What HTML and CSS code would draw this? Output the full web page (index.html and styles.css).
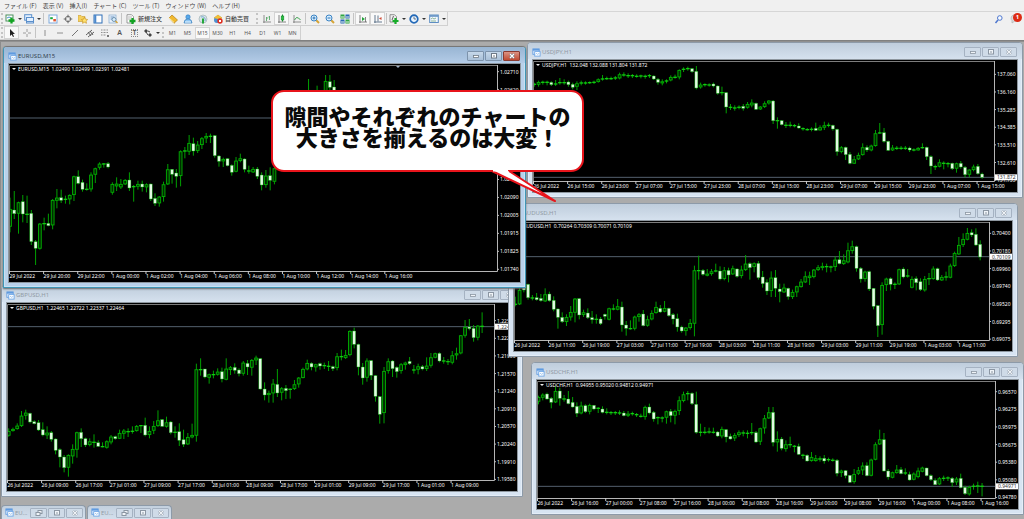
FILE: index.html
```
<!DOCTYPE html>
<html lang="ja">
<head>
<meta charset="utf-8">
<title>EURUSD,M15</title>
<link rel="stylesheet" href="styles.css">
</head>
<body>
<svg class="defs" aria-hidden="true">
  <symbol id="win" viewBox="0 0 10 10"><rect x="1" y="1" width="7" height="6" fill="#eef6ff" stroke="#5f9be0"/><path d="M1 2h7" stroke="#5f9be0" stroke-width="2"/><rect x="3" y="4" width="6" height="5" fill="#fff" stroke="#6ea6e6"/><path d="M4 7l1-1 1 1 2-1" fill="none" stroke="#6ea6e6" stroke-width=".7"/></symbol>
  <symbol id="min" viewBox="0 0 10 8"><rect x="2.5" y="3.5" width="5" height="2" fill="#fff" stroke="#6f7a86" stroke-width=".8"/></symbol>
  <symbol id="max" viewBox="0 0 10 8"><rect x="2.5" y="1.5" width="5" height="4.5" fill="#fff" stroke="#6f7a86"/><path d="M4 4h2" stroke="#6f7a86"/></symbol>
  <symbol id="restore" viewBox="0 0 10 8"><rect x="4" y="1.5" width="4" height="3" fill="#fff" stroke="#6f7a86"/><rect x="2" y="3.5" width="4" height="3" fill="#fff" stroke="#6f7a86"/></symbol>
  <symbol id="close" viewBox="0 0 10 8"><path d="M3 2l4 4M7 2L3 6" stroke="#6f7a86" stroke-width="2.4"/><path d="M3 2l4 4M7 2L3 6" stroke="#fff" stroke-width="1.1"/></symbol>
</svg>

<header>
  <nav class="menu">
    <button>ファイル (F)</button><button>表示 (V)</button><button>挿入(I)</button><button>チャート (C)</button><button>ツール (T)</button><button>ウィンドウ (W)</button><button>ヘルプ (H)</button>
  </nav>
  <div class="row">
    <div class="bar">
      <i class="grip"></i>
      <button class="tool drop" aria-label="新規チャート"><svg viewBox="0 0 10 10"><rect x="1" y="1" width="7" height="6" fill="#fff" stroke="#4b8f5c"/><path d="M2 4l2-1 2 1" fill="none" stroke="#4a90d0"/><path d="M6.5 3.5v6M3.5 6.5h6" stroke="#12a322" stroke-width="2.3"/></svg></button>
      <button class="tool drop" aria-label="組表示"><svg viewBox="0 0 10 10"><rect x=".7" y=".7" width="7" height="5.5" fill="#e3f0ff" stroke="#5b8fca"/><rect x="2.5" y="3.5" width="7" height="5.5" fill="#e3f0ff" stroke="#5b8fca"/><path d="M2.5 7.5h7" stroke="#5b8fca"/></svg></button>
      <i class="sep"></i>
      <button class="tool" aria-label="気配値表示"><svg viewBox="0 0 10 10"><rect x="1" y="1" width="8" height="8" fill="#fff" stroke="#7ea9dc"/><path d="M2.2 3.2h2.6v2H2.2z" fill="#18a83a"/><path d="M5.3 5h2.6v2.4H5.3z" fill="#e0532b"/></svg></button>
      <button class="tool" aria-label="データウィンドウ"><svg viewBox="0 0 10 10"><circle cx="5" cy="5" r="2.7" fill="none" stroke="#777"/><path d="M5 .7v3M5 6.3v3M.7 5h3M6.3 5h3" stroke="#666"/></svg></button>
      <button class="tool" aria-label="ナビゲーター"><svg viewBox="0 0 10 10"><path d="M0 1.5h3l1 1h3v5H0z" fill="#f5d05d" stroke="#c79a2f" stroke-width=".6"/><path d="M6.5 3.2l1 2 2.2.3-1.6 1.6.4 2.2-2-1-2 1 .4-2.2L3.3 5.500l2.200-.3z" fill="#ffe36e" stroke="#c28a1d" stroke-width=".6"/></svg></button>
      <button class="tool" aria-label="ターミナル"><svg viewBox="0 0 10 10"><rect x="1" y="1" width="8" height="8" fill="#fff" stroke="#2e6fb7"/><path d="M2.300 1v8" stroke="#4b88cc" stroke-width="2"/></svg></button>
      <button class="tool" aria-label="ストラテジーテスター"><svg viewBox="0 0 10 10"><rect x="1" y="1" width="7" height="8" fill="#e8f1fb" stroke="#85a9cf" stroke-width=".7"/><path d="M2.500 3h4M2.500 5h2" stroke="#6c96c4"/><circle cx="6" cy="5.500" r="2" fill="#d7ecfb" stroke="#59819f" stroke-width=".8"/><path d="M7.500 7l2 2" stroke="#d2a235" stroke-width="1.500"/></svg></button>
      <i class="sep"></i>
      <button class="tool text"><svg viewBox="0 0 10 10"><path d="M1 .7h4.500l2 2V9H1z" fill="#fff" stroke="#777" stroke-width=".7"/><path d="M2 3h4M2 5h3" stroke="#888" stroke-width=".6"/><path d="M6.500 4v6M3.500 7h6" stroke="#12a322" stroke-width="2.300"/></svg>新規注文</button>
      <button class="tool" aria-label="MetaEditor"><svg viewBox="0 0 10 10"><path d="M1 4l3-3 5.500 5-3.500 3.300z" fill="#f0b92f" stroke="#b67e13" stroke-width=".7"/><path d="M1 4l5 4.500" stroke="#fff1b0"/></svg></button>
      <button class="tool" aria-label="アカウント"><svg viewBox="0 0 10 10"><circle cx="5" cy="3" r="2.200" fill="#5aa9ea" stroke="#2e79be" stroke-width=".6"/><path d="M1 9q0-4 4-4t4 4z" fill="#8cc6f5" stroke="#397fbc" stroke-width=".7"/><path d="M2 8h6" stroke="#eaf6ff"/></svg></button>
      <button class="tool" aria-label="シグナル"><svg viewBox="0 0 10 10"><circle cx="5" cy="5" r="4" fill="#d9e6e8" stroke="#a7b7bd" stroke-width=".8"/><path d="M3 3a3 3 0 0 1 4 4" fill="none" stroke="#78a8d0"/><path d="M5 4.500v5" stroke="#25a73a" stroke-width="2"/></svg></button>
      <button class="tool text"><svg viewBox="0 0 10 10"><path d="M1 4l4-3 4 3-4 2z" fill="#f3c037" stroke="#b7851e" stroke-width=".5"/><circle cx="4" cy="6" r="3" fill="#4d8fd0"/><path d="M1 4l4-3 4 3-4 1z" fill="#f3c037"/><circle cx="7" cy="7" r="2.700" fill="#df2f22"/><rect x="6" y="6" width="2" height="2" fill="#fff"/></svg>自動売買</button>
      <i class="grip"></i>
      <button class="tool" aria-label="バーチャート"><svg viewBox="0 0 10 10"><path d="M2 1v8M1 8h8" stroke="#777" stroke-width=".8"/><path d="M4.500 3v4M4.500 4H6M7.500 2v4M6.500 3h1" stroke="#48a05a" stroke-width=".8"/></svg></button>
      <button class="tool on" aria-label="ローソク足"><svg viewBox="0 0 10 10"><path d="M2 1v8M1 8h8" stroke="#666" stroke-width=".8"/><path d="M5.500.5v7" stroke="#138b28"/><rect x="4.200" y="2" width="2.600" height="4" fill="#29c043" stroke="#138b28" stroke-width=".6"/></svg></button>
      <button class="tool" aria-label="ラインチャート"><svg viewBox="0 0 10 10"><path d="M2 1v8M1 8h8" stroke="#777" stroke-width=".8"/><path d="M2.500 6q2-4 4-2l2 2" fill="none" stroke="#3aa24d"/></svg></button>
      <i class="sep"></i>
      <button class="tool" aria-label="拡大"><svg viewBox="0 0 10 10"><path d="M6 6l3 3" stroke="#d6a536" stroke-width="2"/><circle cx="4" cy="4" r="3" fill="#d8eeff" stroke="#3b83c3"/><path d="M2.500 4h3M4 2.500v3" stroke="#2c75b5"/></svg></button>
      <button class="tool" aria-label="縮小"><svg viewBox="0 0 10 10"><path d="M6 6l3 3" stroke="#d6a536" stroke-width="2"/><circle cx="4" cy="4" r="3" fill="#d8eeff" stroke="#3b83c3"/><path d="M2.500 4h3" stroke="#2c75b5"/></svg></button>
      <button class="tool" aria-label="整列"><svg viewBox="0 0 10 10"><path d="M.5.500h4v4h-4zM5.500 5.500h4v4h-4z" fill="#2fa544"/><path d="M5.500.500h4v4h-4zM.5 5.500h4v4h-4z" fill="#2868b5"/><path d="M1 3h3M6 3h3M1 8h3M6 8h3" stroke="#eaf6ea"/></svg></button>
      <i class="sep"></i>
      <button class="tool on" aria-label="自動スクロール"><svg viewBox="0 0 10 10"><path d="M2 1v8M1 8h8M7.500 3v5" stroke="#666" stroke-width=".8"/><path d="M4 3l3 2-3 2z" fill="#24a53b"/></svg></button>
      <button class="tool on" aria-label="チャートシフト"><svg viewBox="0 0 10 10"><path d="M2 1v8M1 8h8M5 1.500v6" stroke="#556c84" stroke-width=".9"/><path d="M8.500 3L6 4.500 8.500 6z" fill="#cf4935"/></svg></button>
      <i class="sep"></i>
      <button class="tool drop" aria-label="インディケータ"><svg viewBox="0 0 10 10"><path d="M1 .7h4.500l2 2V8H1z" fill="#eee" stroke="#777" stroke-width=".8"/><path d="M3 6l1.500-4" stroke="#666"/><path d="M6.500 4v6M3.500 7h6" stroke="#16ac28" stroke-width="2.200"/></svg></button>
      <button class="tool drop wide" aria-label="時間足"><svg viewBox="0 0 10 10"><circle cx="5" cy="5" r="3.800" fill="#e8f4ff" stroke="#2369b7" stroke-width="1.700"/><path d="M5 2.500V5h2" fill="none" stroke="#345" stroke-width=".7"/></svg></button>
      <button class="tool drop wide" aria-label="定型チャート"><svg viewBox="0 0 10 10"><rect x=".7" y="1" width="8.600" height="7.500" fill="#f2f8ff" stroke="#5d8dc2"/><path d="M1 2h8" stroke="#5d8dc2" stroke-width="1.500"/><path d="M2 5l1.500-1L5 5l2-1M2 7h5" fill="none" stroke="#72a27c" stroke-width=".8"/></svg></button>
    </div>
    <div class="status">
      <button class="tool" aria-label="検索"><svg viewBox="0 0 10 10"><path d="M4 6L1.500 9" stroke="#4f78cf" stroke-width="1.500"/><circle cx="5.800" cy="4" r="2.300" fill="#f7fbff" stroke="#4f78cf"/></svg></button>
      <button class="tool notice" aria-label="通知"><svg viewBox="0 0 10 10"><path d="M1 4q0-3 4-3t4 3-4 3L2 9V6.500Q1 6 1 4z" fill="#ddd" stroke="#aaa" stroke-width=".6"/></svg><span>1</span></button>
    </div>
  </div>
  <div class="row">
    <div class="bar">
      <i class="grip"></i>
      <button class="tool on" aria-label="カーソル"><svg viewBox="0 0 10 10"><path d="M3 1v7l1.700-1.500L6 9l1-.5-1.200-2.400H8z" fill="#222"/></svg></button>
      <button class="tool" aria-label="十字カーソル"><svg viewBox="0 0 10 10"><path d="M5 1v3M5 6v3M1 5h3M6 5h3" stroke="#888" stroke-width=".8"/></svg></button>
      <i class="sep"></i>
      <button class="tool" aria-label="垂直線"><svg viewBox="0 0 10 10"><path d="M5 2v6" stroke="#777" stroke-width=".8"/></svg></button>
      <button class="tool" aria-label="水平線"><svg viewBox="0 0 10 10"><path d="M2 5h6" stroke="#777" stroke-width=".8"/></svg></button>
      <button class="tool" aria-label="トレンドライン"><svg viewBox="0 0 10 10"><path d="M2 8l6-6" stroke="#666" stroke-width=".9"/></svg></button>
      <button class="tool" aria-label="チャネル"><svg viewBox="0 0 10 10"><path d="M1 7l6-5M3 9l6-5M3 4l3 4M5 3l3 4" stroke="#555" stroke-width=".9"/></svg></button>
      <button class="tool" aria-label="フィボナッチ"><svg viewBox="0 0 10 10"><path d="M1 2h7M1 4.500h7M1 7h5" stroke="#777" stroke-width=".8" stroke-dasharray="1 .5"/><path d="M7 7h2v2H7z" fill="#777"/></svg></button>
      <button class="tool letter">A</button>
      <button class="tool letter" aria-label="ラベル"><span>T</span></button>
      <button class="tool drop" aria-label="矢印"><svg viewBox="0 0 10 10"><path d="M1 3l2-2 2 2-2 2zM5 7l2-2 2 2-2 2z" fill="#444"/><path d="M3 4l2 3M5 3l2 1" stroke="#444"/></svg></button>
      <i class="grip"></i>
      <button class="tf">M1</button><button class="tf">M5</button><button class="tf on">M15</button><button class="tf">M30</button><button class="tf">H1</button><button class="tf">H4</button><button class="tf">D1</button><button class="tf">W1</button><button class="tf">MN</button>
    </div>
  </div>
</header>

<main class="desk">
  <section class="window jpy" data-chart="jpy"></section>
  <section class="window gbp" data-chart="gbp"></section>
  <section class="window aud" data-chart="aud"></section>
  <section class="window chf" data-chart="chf"></section>
  <section class="window eur active" data-chart="eur"></section>
  <div class="tray">
    <div class="mini"><svg class="wicon"><use href="#win"/></svg><h2>EU...</h2><button aria-label="元に戻す"><svg><use href="#restore"/></svg></button><button aria-label="最大化"><svg><use href="#max"/></svg></button><button aria-label="閉じる"><svg><use href="#close"/></svg></button></div>
    <div class="mini"><svg class="wicon"><use href="#win"/></svg><h2>EU...</h2><button aria-label="元に戻す"><svg><use href="#restore"/></svg></button><button aria-label="最大化"><svg><use href="#max"/></svg></button><button aria-label="閉じる"><svg><use href="#close"/></svg></button></div>
  </div>
  <aside class="callout">
    <p>隙間やそれぞれのチャートの<br>大きさを揃えるのは大変！</p>
    <svg class="tail" viewBox="0 0 68 34"><path d="M2 1L65 31 19 1" fill="#fff" stroke="#e8141b" stroke-width="2" stroke-linejoin="round"/><path d="M3 0h15" stroke="#fff" stroke-width="3"/></svg>
  </aside>
</main>
<script src="charts.js"></script>
</body>
</html>
```
FILE: styles.css
```
* { box-sizing: border-box; }
body {
  margin: 0;
  height: 100vh;
  display: flex;
  flex-direction: column;
  overflow: hidden;
  background: #ababab;
  font-family: "Noto Sans", "Noto Sans CJK JP", sans-serif;
  font-size: 6px;
  color: #444;
}
button {
  font: inherit;
  color: inherit;
  margin: 0;
  padding: 0;
  border: 0;
  background: none;
}
.defs { position: absolute; width: 0; height: 0; }

header { background: #f0f0f0; border-bottom: 1px solid #808080; }
.menu {
  display: flex;
  gap: 6px;
  height: 12px;
  padding-left: 4px;
  border-bottom: 1px solid #d6d6d6;
  font-family: "Noto Sans CJK JP", sans-serif;
}
.row { display: flex; justify-content: space-between; height: 14px; }
.bar {
  display: flex;
  align-items: center;
  border: 1px solid #d0d0d0;
  border-width: 0 1px 1px 0;
}
.tool {
  display: flex;
  align-items: center;
  justify-content: center;
  width: 15px;
  height: 13px;
}
.tool svg { width: 10px; height: 10px; flex: none; }
.on { background: #f9f9f9; box-shadow: inset 0 0 0 1px #d4d4d4; }
.drop { width: 19px; gap: 3px; }
.drop::after { content: ""; border: 2px solid transparent; border-top-color: #333; border-bottom: 0; width: 0; }
.wide { width: 20px; }
.text { width: auto; gap: 2px; padding: 0 3px; font-family: "Noto Sans CJK JP", sans-serif; font-weight: 500; }
.sep { width: 1px; height: 11px; background: #c4c4c4; margin: 0 1px; }
.grip { width: 0; height: 11px; border-left: 2px dotted #c4c4c4; margin: 0 1px; }
.text + .grip { margin-left: 4px; }
.letter { font-size: 7px; font-weight: 600; color: #555; }
.letter span { border: 1px dotted #888; line-height: 6px; padding: 0 1px; }
.tf { width: 15px; height: 12px; font-size: 5px; color: #555; }
.status { display: flex; align-items: center; gap: 1px; padding-right: 2px; }
.notice { position: relative; }
.notice span {
  position: absolute;
  top: 0;
  right: 0;
  width: 9px;
  border-radius: 5px;
  background: #dd2a14;
  color: #fff;
  font-weight: 700;
  line-height: 9px;
}

.desk { position: relative; flex: 1; overflow: hidden; border-left: 1px solid #8c8c8c; border-top: 1px solid #909090; }
.window {
  position: absolute;
  padding: 0 4px 4px;
  border: 1px solid #8d9aa8;
  border-radius: 4px 4px 0 0;
  background: #d7e4f2;
  box-shadow: inset 0 0 0 1px #e4edf7;
  display: flex;
  flex-direction: column;
}
.active { background: #b9d1ea; border-color: #3f95b5; border-top-color: #777; box-shadow: inset 0 0 0 1px #c6e2f4, 0 1px 2px #666; }
.jpy { left: 526px; top: 0; width: 496px; height: 156px; }
.aud { left: 507px; top: 161px; width: 510px; height: 154px; }
.gbp { left: 0; top: 243px; width: 522px; height: 212px; }
.chf { left: 530px; top: 320px; width: 493px; height: 153px; }
.eur { left: 2px; top: 4px; width: 523px; height: 242px; }
.titlebar {
  display: flex;
  align-items: center;
  gap: 1px;
  height: 16px;
  flex: none;
  margin: 0 -4px;
  padding: 2px 5px 0 4px;
  border-radius: 3px 3px 0 0;
  background: linear-gradient(#bfcddc, #d5e1ee);
}
.active .titlebar { background: linear-gradient(#98b5d3, #b4cce7); }
h2 { flex: 1; margin: 0; font-size: 6px; font-weight: 400; color: #929ba5; }
.active h2 { color: #33434f; }
.wicon { width: 9px; height: 9px; flex: none; }
.titlebar button, .mini button {
  display: flex;
  align-items: center;
  justify-content: center;
  width: 17px;
  height: 10px;
  flex: none;
  border: 1px solid #a5b2c2;
  border-radius: 1px;
  background: #cfdbe8;
}
.titlebar button svg, .mini button svg { width: 10px; height: 8px; opacity: .7; }
.active .titlebar button { border-color: #7d93ab; background: linear-gradient(#c6d8ea, #a9c0d8); }
.active .titlebar button:last-child { border-color: #8a3a31; background: linear-gradient(#dc9384, #c04a32); }
.active .titlebar button svg { opacity: 1; }
.chart { display: block; flex: 1; min-height: 0; width: 100%; background: #000; outline: 1px solid #8e979f; outline-offset: -1px; }
.chart text { font: 5px "Noto Sans", sans-serif; fill: #fff; }
.chart .tag { fill: #333; }

.tray { position: absolute; left: 0; bottom: 0; display: flex; gap: 1px; }
.mini {
  display: flex;
  align-items: center;
  gap: 1px;
  width: 85px;
  height: 14px;
  padding: 0 2px 0 3px;
  border: 1px solid #8d9aa8;
  border-bottom: 0;
  border-radius: 4px 4px 0 0;
  background: linear-gradient(#c3d0de, #d3dfec);
}

.callout {
  position: absolute;
  left: 270px;
  top: 48px;
  width: 313px;
  height: 82px;
  padding-top: 13px;
  border: 2px solid #e8141b;
  border-radius: 13px;
  background: #fff;
  color: #0a0a0a;
  text-align: center;
}
.callout p { margin: 0; font: 900 22px/21px "Noto Sans CJK JP", sans-serif; white-space: nowrap; }
.tail { position: absolute; left: 217px; top: 78px; width: 68px; height: 34px; }
```
FILE: charts.js
```
// Candles: high, body top, body bottom, low in thirds of a pixel; u = rising, d = falling, none = flat.
const charts = {
  eur: {
    title: "EURUSD,M15", prices: "1.02490 1.02499 1.02391 1.02481", w: 513, h: 220, right: 489, bottom: 208, dy: 18, x0: 2,
    line: 219, tag: "", shift: 390,
    axis: "1.02710,1.02620,,,,,1.02180,1.02090,1.02005,1.01915,1.01825,1.01740", a0: 80, step: 53.9,
    times: "29 Jul 2022|29 Jul 20:00|29 Jul 22:00|1 Aug 00:00|1 Aug 02:00|1 Aug 04:00|1 Aug 06:00|1 Aug 08:00|1 Aug 10:00|1 Aug 12:00|1 Aug 14:00|1 Aug 16:00",
    data: "458 492 545 562 u/438 495 506 522 d/470 472 506 566 u/450 470 507 532 d/452 506 509 534/495 505 590 600 d/585 590 610 660 d/534 536 611 614 u/518 534 537 556/506 535 542 544 d/462 465 541 553 u/432 458 467 490 u/434 458 466 474 d/452 461 465 476/448 450 463 478 u/392 394 450 468 u/376 395 415 418 d/404 412 433 440 d/415 431 435 437/382 389 433 440 u/368 370 389 414 u/352 356 368 374 u/354 355 359 368/351 356 366 370 d/412 417 443 449 u/397 416 424 438 u/402 417 427 432 u/402 405 418 420 u/382 405 429 438 d/420 423 427 470/407 417 425 434 u/407 417 426 440 d/415 418 427 442 u/416 417 462 468 d/445 460 475 483 d/453 455 475 485 u/410 418 456 470 u/357 373 418 420 u/372 373 388 416 d/372 384 394 428 d/316 319 393 424 u/306 316 320 340/270 294 320 330 u/278 296 318 332 d/288 299 318 324 u/276 280 300 312 u/264 273 280 294 u/266 272 276 294/270 272 332 338 d/330 333 349 365 d/338 342 349 366 u/340 341 362 364 d/358 361 382 392 d/336 347 380 382 u/326 340 348 352 u/340 342 373 382 d/362 376 380 386/366 372 382 384 u/366 372 394 402 d/382 390 420 436 d/375 392 420 428 u/367 392 406 436 d/350 370 410 418 u////////102 140 160 170 u//122 140 160 170 d//90 108 150 160 u/90 110 127 150 d/105 126 140 150 d"
  },
  gbp: {
    title: "GBPUSD,H1", prices: "1.22465 1.22722 1.22337 1.22464", w: 512, h: 190, right: 488, bottom: 178, dy: 17, x0: 2.7,
    line: 125, tag: "1.22464",
    axis: "1.22560,1.22230,1.21900,1.21570,1.21240,1.20910,1.20570,1.20240,1.19910,1.19580", a0: 107, step: 52.9,
    times: "26 Jul 2022|26 Jul 09:00|26 Jul 17:00|27 Jul 01:00|27 Jul 09:00|27 Jul 17:00|28 Jul 01:00|28 Jul 09:00|28 Jul 17:00|29 Jul 01:00|29 Jul 09:00|29 Jul 17:00|1 Aug 01:00|1 Aug 09:00",
    data: "430 438 452 455 u/428 432 438 440 u/415 422 432 434 u/378 392 423 426 u/374 383 392 404 u/383 385 411 415 d/406 410 416 418 d/405 413 435 438 d/412 434 450 454 d/424 443 451 462 u/438 443 463 470 d/460 462 496 508 d/490 494 516 547 d/510 516 548 562 d/508 510 548 575 u/478 492 514 536 u/440 442 494 518 u/430 442 461 486 d/458 461 480 486 d/460 469 480 484 u/448 470 475 488/466 473 484 486 d/472 483 487 487/466 469 488 491 u/450 455 472 478 u/452 455 461 464 d/434 444 461 462 u/432 437 446 462 u/430 438 443 456/424 437 442 446/420 423 438 440 u/420 420 423 444/398 421 450 454 d/424 438 450 460 u/408 423 437 447 u/376 406 423 426 u/402 404 424 426 d/395 412 425 428 u/408 411 443 448 d/424 440 444 458/415 440 466 483 d/434 464 478 486 d/444 456 478 480 u/416 450 457 460 u/236 253 452 470 u/220 252 257 272/252 252 276 280 d/266 268 278 296 u/257 267 271 280/250 260 269 272 u/248 260 282 292 d/220 251 284 286 u/243 247 255 270 u/235 247 256 266 d/250 255 266 274 d/228 233 266 272 u/225 235 246 270 d/222 225 248 272 u/212 218 226 240 u/220 221 312 314 d/292 312 330 346 d/317 324 330 353 u/282 296 325 353 u/252 298 324 336 d/306 310 323 346 u/300 310 317 342 d/310 311 316 341/285 298 312 315 u/276 278 298 308 u/248 252 279 280 u/224 234 253 256 u/232 235 246 256 d/236 238 247 260 u/233 236 243 254 d/233 240 243 252/228 242 246 258/242 245 251 258 d/204 214 249 256 u/194 213 217 226/195 210 219 222 u/136 138 210 214 u/128 138 178 190 d/176 178 246 271 d/234 246 279 299 d/220 227 278 290 u/225 227 271 285 d/270 272 334 350 d/333 335 388 416 d/246 258 384 415 u/220 229 258 266 u/225 228 251 276 d/244 247 260 278 d/234 238 258 266 u/230 233 240 254 u/216 229 236 240 d/240 253 257 266/236 244 254 268 u/240 245 252 256 d/217 242 252 258 u/204 217 242 248 u/203 205 218 220 u/202 205 228 232 d/216 226 230 236/222 228 232 240/198 211 233 238 u/188 205 211 224 u/150 151 205 208 u/105 126 152 158 u/102 126 131 136 d/120 130 158 170 d/120 122 158 166 u/82 122 125 144"
  },
  jpy: {
    title: "USDJPY,H1", prices: "132.048 132.088 131.804 131.872", w: 486, h: 134, right: 462, bottom: 122, dy: 19, x0: 2.3,
    line: 412, tag: "131.872",
    axis: "137.060,136.160,135.285,134.385,133.510,132.610,131.735", a0: 103, step: 52.9,
    times: "26 Jul 2022|26 Jul 15:00|26 Jul 23:00|27 Jul 07:00|27 Jul 15:00|27 Jul 23:00|28 Jul 07:00|28 Jul 15:00|28 Jul 23:00|29 Jul 07:00|29 Jul 15:00|29 Jul 23:00|1 Aug 07:00|1 Aug 15:00",
    data: "128 131 136 140/122 126 134 140 u/122 125 128 134/122 125 129 136/124 127 134 138 d/120 130 134 138/114 126 131 134/118 126 129 134/122 126 134 140 d/128 133 142 148 d/124 130 140 150 u/122 127 131 136/124 127 130 134/124 126 129 132/122 125 129 132/115 118 126 128 u/105 115 118 122/110 114 118 120/110 114 117 120/108 112 116 120/98 103 115 118 u/97 103 106 110/100 105 108 114/102 105 110 114/103 107 110 113/104 106 111 115/104 107 111 116/102 105 109 114/106 108 117 120 d/114 118 127 134 d/118 124 130 136 u/118 121 126 130/106 111 121 124 u/104 110 113 116/88 90 112 118 u/82 86 91 96/80 84 88 92/84 86 95 98 d/78 94 144 148 d/128 134 142 146 u/130 132 136 140/130 133 137 140/128 132 138 142 d/136 138 160 164 d/140 156 160 166/156 158 201 220 d/192 200 204 210/196 202 206 212/196 200 205 208/192 199 205 212 d/186 192 203 206 u/178 188 196 202 u/188 190 208 210 d/198 200 208 210 u/184 190 201 204 u/180 182 190 194 u/180 183 242 252 d/232 240 244 266/240 242 254 256 d/246 254 258 264/245 254 258 262/252 255 259 262/250 258 264 266 d/262 264 269 272/264 267 271 272/262 266 271 274/248 265 271 272 d/256 262 271 272 u/245 256 263 270 u/248 254 258 262/254 256 267 272 d/266 268 335 347 d/318 322 336 340 u/320 322 344 360 d/336 343 370 373 d/348 358 371 372 u/338 345 358 360 u/310 322 345 347 u/316 322 330 336 d/314 317 331 334 u/270 280 318 320 u/249 277 281 281/264 278 304 308 d/302 304 331 333 d/315 323 331 333 u/318 323 326 330/318 323 326 330/318 323 326 330/320 324 330 336 d/325 328 331 334/321 324 331 332 u/310 321 325 326/320 322 350 360 d/346 350 378 402 d/374 378 382 390/358 367 380 382 u/364 368 372 388/366 369 372 382/368 370 386 390 d/368 370 386 398 u/363 370 381 386 d/378 382 404 412 d/388 389 404 412 u/374 380 390 394 u/372 379 401 404 d/398 402 412 416 d"
  },
  aud: {
    title: "AUDUSD,H1", prices: "0.70264 0.70309 0.70071 0.70109", w: 500, h: 132, right: 476, bottom: 120, dy: 25, x0: 2.3,
    line: 185, tag: "0.70109",
    axis: "0.70400,0.70180,0.69960,0.69740,0.69520,0.69295,0.69075", a0: 115, step: 52.9,
    times: "26 Jul 2022|26 Jul 11:00|26 Jul 19:00|27 Jul 03:00|27 Jul 11:00|27 Jul 19:00|28 Jul 03:00|28 Jul 11:00|28 Jul 19:00|29 Jul 03:00|29 Jul 11:00|29 Jul 19:00|1 Aug 03:00|1 Aug 11:00",
    data: "305 326 330 334/274 285 328 330 u/270 275 285 292 d/266 268 308 314 d/300 307 312 316/294 308 314 317 d/297 310 317 320 d/280 298 319 321 u/290 297 317 320 d/304 316 343 349 d/340 342 367 401 d/352 367 380 384 d/358 366 381 393 u/333 351 367 377 u/309 311 353 382 u/309 311 360 373 d/344 352 360 366 u/340 354 368 372 d/348 368 374 386 d/358 371 375 386/366 372 386 390 d/356 358 364 374 d/338 340 374 376 u/328 340 344 346/312 334 344 346 u/320 336 390 410 d/378 390 400 422 d/376 399 402 404/362 365 401 406 u/354 358 366 380 u/345 357 392 394 d/362 373 392 395 u/346 354 373 376 u/320 336 354 356 u/330 340 351 354 d/318 339 350 352 u/338 340 362 365 d/354 359 372 388 d/356 371 396 410 d/392 396 408 413 d/396 398 408 422 u/372 384 399 404 u/212 226 386 424 u/182 225 228 254/222 226 238 242 d/222 236 242 244 u/222 229 237 242 u/206 226 230 232/214 228 252 256 d/216 226 252 256 u/218 226 240 262 d/212 220 238 240 u/220 222 244 248 d/212 224 243 250 u/180 206 225 228 u/202 206 218 254 d/202 205 216 232 u/198 205 248 254 d/228 246 266 278 d/253 262 288 300 d/229 248 288 306 u/225 248 280 306 d/266 282 290 322 d/266 278 292 294 u/278 280 305 314 d/284 291 306 312 u/272 274 292 306 u/252 260 276 278 u/229 244 262 264 u/230 242 249 270 u/222 224 246 250 u/210 217 225 228 u/203 213 219 226 u/206 213 217 232/212 214 217 232/184 194 216 228 u/168 194 206 208 d/178 196 207 210 u/143 166 202 205 u/137 154 168 176 u/152 155 220 230 d/216 220 252 263 d/227 230 252 260 u/227 230 282 288 d/279 280 334 343 d/330 332 392 426 d/262 270 390 419 u/248 251 270 288 u/247 251 268 286 d/262 266 269 282/221 223 268 270 u/217 222 246 250 d/222 241 244 248/244 252 278 280 u/244 251 263 286 d/250 260 284 288 d/243 252 286 290 u/234 249 253 270/214 221 252 254 u/218 221 255 258 d/240 246 256 258 u/230 244 248 257/206 212 248 250 u/170 174 213 216 u/126 150 178 180 u/115 132 150 156 u/99 114 134 136 u/103 113 120 126 d/100 118 150 153 d/136 148 186 196 d"
  },
  chf: {
    title: "USDCHF,H1", prices: "0.94955 0.95020 0.94812 0.94971", w: 483, h: 131, right: 459, bottom: 119, dy: 24, x0: 2.5,
    line: 394, tag: "0.94971",
    axis: "0.96570,0.96275,0.95975,0.95675,0.95380,0.95080,0.94780", a0: 110, step: 52.9,
    times: "26 Jul 2022|26 Jul 16:00|27 Jul 00:00|27 Jul 08:00|27 Jul 16:00|28 Jul 00:00|28 Jul 08:00|28 Jul 16:00|29 Jul 00:00|29 Jul 08:00|29 Jul 16:00|1 Aug 00:00|1 Aug 08:00|1 Aug 16:00",
    data: "122 126 140 148 u/115 119 128 136 u/113 117 132 134 d/126 130 142 160 d/94 108 142 144 u/98 108 130 152 d/120 130 134 140/108 132 146 148 d/126 142 156 158 d/142 154 175 186 d/140 152 175 178 u/148 152 170 174 d/146 150 170 178 u/150 151 162 166 d/156 158 162 174/154 162 172 175 d/160 170 174 178/168 171 174 180/168 171 175 180/166 172 176 180/168 174 182 184 d/168 176 182 186 u/170 174 179 182/174 177 182 186/176 182 186 188/152 156 186 194 u/146 156 174 178 d/168 172 192 200 d/184 186 191 208/184 187 190 202/167 169 188 206 u/162 169 182 202 d/164 168 182 208 u/124 136 168 180 u/110 118 138 142 u/108 114 118 136/112 115 146 150 d/110 148 232 236 d/206 230 234 244/216 230 234 238/218 229 233 236/218 230 234 236/228 231 243 246 d/215 222 244 250 u/222 224 246 262 d/236 244 252 254 d/234 240 250 258 u/226 232 240 246 u/226 232 238 244/226 233 237 250/204 231 237 240/228 233 261 264 d/218 220 260 270 u/180 190 220 236 u/156 172 190 192 u/156 172 262 274 d/229 252 262 290 u/246 252 280 286 d/256 268 282 290 u/245 267 272 278/270 272 276 292/266 274 298 300 d/296 299 302 312/298 301 318 320 d/291 306 318 320 u/300 310 318 320 u/304 310 314 320/300 310 318 326 d/308 312 316 320/310 314 317 320/312 316 355 364 d/344 347 354 366 u/345 347 362 370 d/360 361 382 384 d/342 357 381 386 u/336 346 356 360 u/322 332 346 360 u/322 332 362 364 d/311 314 362 364 u/262 268 314 316 u/224 253 268 270 u/234 254 348 350 d/342 348 366 374 d/350 352 368 370 u/330 344 354 356 u/336 344 356 358 d/340 352 357 360/350 358 375 377 d/352 356 374 376 u/338 347 366 370 u/335 338 350 352 u/338 339 362 364 d/358 362 374 378 d/370 376 389 390 d/366 370 388 390 u/362 368 372 378/364 367 372 378/366 370 383 396 d/366 371 382 390 u/356 370 398 400 d/392 397 416 420 d/392 396 418 422 u/386 392 397 404/380 391 397 414/384 392 398 424"
  }
};

const STEP = 4.265;

function drawChart(c) {
  const y = v => +(v / 3 - c.dy).toFixed(2);
  let s = "";
  const py = y(c.line);
  s += `<path d="M2 ${py}H${c.right}" stroke="#53606e"/>`;
  c.data.split("/").forEach((item, i) => {
    if (!item) return;
    const [hi, top, bot, lo, kind] = item.split(" ");
    const x = +(c.x0 + i * STEP).toFixed(2);
    s += `<path d="M${x} ${y(hi)}V${y(lo)}" stroke="#00a000"/>`;
    if (kind === "u") {
      s += `<rect x="${x - 1.4}" y="${y(top) + .4}" width="2.8" height="${Math.max(1, (bot - top) / 3 - .8)}" fill="#002c00" stroke="#00b000" stroke-width=".9"/>`;
    } else if (kind === "d") {
      s += `<rect x="${x - 1.5}" y="${y(top)}" width="3" height="${(bot - top) / 3}" fill="#e2fbe2" stroke="#00a800" stroke-width=".4"/>`;
    } else {
      s += `<rect x="${x - 1.8}" y="${y(top)}" width="3.6" height="1.3" fill="#10cc10"/>`;
    }
  });
  s += `<path d="M1.500 ${c.bottom}V2.500H${c.right}" fill="none" stroke="#7d7d7d"/>`;
  s += `<path d="M1.500 ${c.bottom + .5}H${c.right + .5}V2" fill="none" stroke="#b5b5b5"/>`;
  s += `<path d="M4 5h4l-2 2z" fill="#eee"/><text x="10" y="8" xml:space="preserve">${c.title}  ${c.prices}</text>`;
  if (c.shift) s += `<path d="M${c.shift - 2} 3h4l-2 2z" fill="#9fb2c6"/>`;
  c.axis.split(",").forEach((t, i) => {
    if (!t) return;
    const ay = y(c.a0 + i * c.step);
    s += `<path d="M${c.right} ${ay}h2" stroke="#bbb"/><text x="${c.right + 3}" y="${ay + 2}">${t}</text>`;
  });
  if (c.tag) s += `<rect x="${c.right + 1}" y="${py - 3}" width="${c.w - c.right - 2}" height="6" fill="#fff"/><text class="tag" x="${c.right + 3}" y="${py + 2}">${c.tag}</text>`;
  c.times.split("|").forEach((t, i) => {
    const tx = 1.5 + i * STEP * 8;
    s += `<path d="M${tx} ${c.bottom}v3" stroke="#ccc"/><text x="${tx}" y="${c.bottom + 7}">${t}</text>`;
  });
  return `<svg class="chart" viewBox="0 0 ${c.w} ${c.h}" preserveAspectRatio="xMinYMin slice">${s}</svg>`;
}

document.querySelectorAll("[data-chart]").forEach(el => {
  const c = charts[el.dataset.chart];
  const btn = (id, label) => `<button aria-label="${label}"><svg><use href="#${id}"/></svg></button>`;
  el.innerHTML = `<div class="titlebar"><svg class="wicon"><use href="#win"/></svg><h2>${c.title}</h2>${btn("min", "最小化")}${btn("max", "最大化")}${btn("close", "閉じる")}</div>` + drawChart(c);
});
```
